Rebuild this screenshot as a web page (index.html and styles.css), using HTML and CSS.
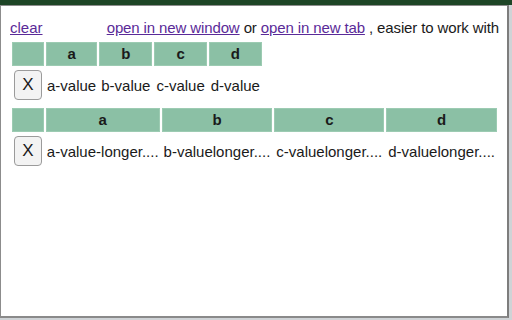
FILE: index.html
```html
<!DOCTYPE html>
<html>
<head>
<meta charset="utf-8">
<link rel="stylesheet" href="styles.css">
</head>
<body>
<div class="popup">
  <div class="toolbar">
    <a class="link" href="#">clear</a>
    <span class="right"><a class="link" href="#">open in new window</a> or <a class="link" href="#">open in new tab</a> , easier to work with</span>
  </div>
  <table class="grid">
    <tr><th class="blank"></th><th>a</th><th>b</th><th>c</th><th>d</th></tr>
    <tr><td class="btncell"><button class="del">X</button></td><td>a-value</td><td class="pad">b-value</td><td class="pad">c-value</td><td class="pad">d-value</td></tr>
  </table>
  <table class="grid second">
    <tr><th class="blank"></th><th>a</th><th>b</th><th>c</th><th>d</th></tr>
    <tr><td class="btncell"><button class="del">X</button></td><td>a-value-longer....</td><td class="pad">b-valuelonger....</td><td class="pad">c-valuelonger....</td><td class="pad">d-valuelonger....</td></tr>
  </table>
</div>
</body>
</html>
```
FILE: styles.css
```css
html, body {
  margin: 0;
  padding: 0;
}
body {
  width: 512px;
  height: 320px;
  overflow: hidden;
  background: linear-gradient(#1d4526 0, #1d4526 5px, #cfd3d6 5px);
  font-family: "Liberation Sans", Arial, sans-serif;
  font-size: 15px;
  color: #1a1a1a;
}
.popup {
  box-sizing: border-box;
  margin-top: 5px;
  width: 509px;
  height: 313px;
  background: #fff;
  border: 1px solid #8c8c8c;
  border-right: 2px solid #7d7d7d;
  border-bottom: 2px solid #8a8a8a;
  padding: 13px 8px 0 9px;
}
.toolbar {
  display: flex;
  justify-content: space-between;
  line-height: 18px;
  white-space: nowrap;
}
.toolbar .right {
  letter-spacing: -0.12px;
}
.link {
  color: #5a2a98;
  text-decoration: underline;
}
.grid {
  border-collapse: separate;
  border-spacing: 2px;
  margin-top: 3px;
  font-size: 15px;
}
.grid.second {
  margin-top: 2px;
}
.grid th {
  background: #8bc0a5;
  border: 1px solid #9ccbb2;
  height: 22px;
  padding: 0 1px;
  font-weight: bold;
  font-size: 15px;
  line-height: 18px;
  text-align: center;
}
.grid th.blank {
  width: 28px;
}
.grid td {
  padding: 0 1px;
  white-space: nowrap;
}
.grid td.pad {
  padding: 0 2px;
}
.grid td.btncell {
  padding: 0;
  text-align: center;
}
.del {
  box-sizing: border-box;
  width: 28px;
  height: 30px;
  margin: 2px 0;
  padding: 0;
  background: #f3f3f3;
  border: 1px solid #9b9b9b;
  border-radius: 4px;
  font-family: "Liberation Sans", Arial, sans-serif;
  font-size: 17px;
  color: #1a1a1a;
  vertical-align: middle;
}
```
